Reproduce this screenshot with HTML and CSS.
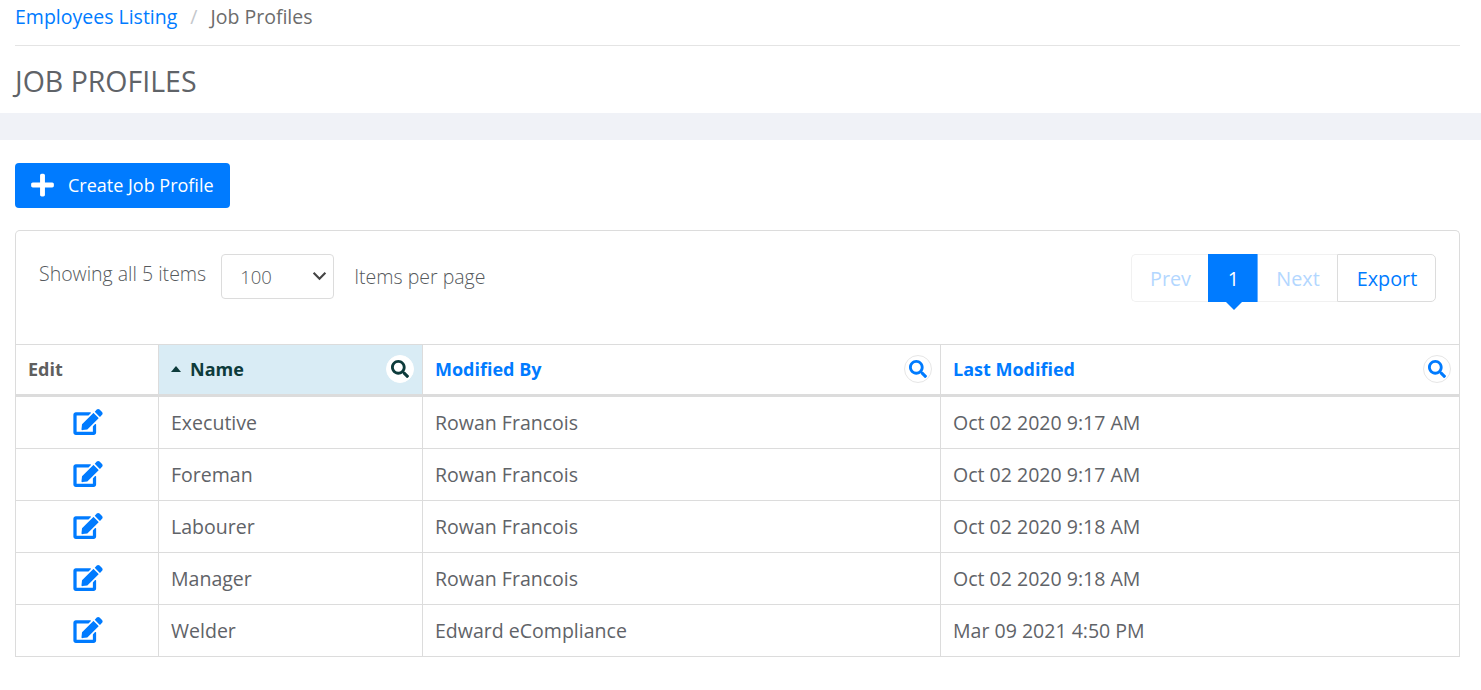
FILE: index.html
```html
<!DOCTYPE html>
<html lang="en">
<head>
<meta charset="utf-8">
<title>Job Profiles</title>
<link rel="stylesheet" href="styles.css">
</head>
<body>
<svg class="defs" aria-hidden="true">
  <symbol id="i-edit" viewBox="0 0 576 512"><path d="M402.6 83.2l90.2 90.2c3.8 3.8 3.8 10 0 13.8L274.4 405.6l-92.8 10.3c-12.4 1.4-22.9-9.1-21.5-21.5l10.3-92.8L388.8 83.2c3.8-3.8 10-3.8 13.8 0zm162-22.9l-48.8-48.8c-15.2-15.2-39.9-15.2-55.2 0l-35.4 35.4c-3.8 3.8-3.8 10 0 13.8l90.2 90.2c3.8 3.8 10 3.8 13.8 0l35.4-35.4c15.2-15.3 15.2-40 0-55.2zM384 346.2V448H64V128h229.8c3.2 0 6.2-1.3 8.5-3.5l40-40c7.6-7.6 2.2-20.5-8.5-20.5H48C21.5 64 0 85.5 0 112v352c0 26.5 21.5 48 48 48h352c26.5 0 48-21.5 48-48V306.2c0-10.7-12.9-16-20.5-8.5l-40 40c-2.2 2.3-3.5 5.3-3.5 8.5z"/></symbol>
  <symbol id="i-search" viewBox="0 0 512 512"><path d="M505 442.7L405.3 343c-4.5-4.5-10.6-7-17-7H372c27.6-35.3 44-79.7 44-128C416 93.1 322.9 0 208 0S0 93.1 0 208s93.1 208 208 208c48.3 0 92.7-16.4 128-44v16.3c0 6.4 2.5 12.5 7 17l99.7 99.7c9.4 9.4 24.6 9.4 33.9 0l28.3-28.3c9.4-9.4 9.4-24.6.1-34zM208 336c-70.7 0-128-57.2-128-128 0-70.7 57.2-128 128-128 70.7 0 128 57.2 128 128 0 70.7-57.2 128-128 128z"/></symbol>
  <symbol id="i-plus" viewBox="0 0 448 512"><path d="M416 208H272V64c0-17.67-14.33-32-32-32h-32c-17.67 0-32 14.33-32 32v144H32c-17.67 0-32 14.33-32 32v32c0 17.67 14.33 32 32 32h144v144c0 17.67 14.33 32 32 32h32c17.67 0 32-14.33 32-32V304h144c17.67 0 32-14.33 32-32v-32c0-17.67-14.33-32-32-32z"/></symbol>
</svg>

<header class="top">
  <nav class="crumbs">
    <a class="crumb-link" href="#">Employees Listing</a>
    <span class="crumb-sep">/</span>
    <span class="crumb-current">Job Profiles</span>
  </nav>
  <h1 class="title">JOB PROFILES</h1>
</header>
<div class="band"></div>

<main class="content">
  <a class="create-btn" href="#"><svg class="create-icon"><use href="#i-plus"/></svg><span>Create Job Profile</span></a>

  <section class="card">
    <div class="toolbar">
      <div class="toolbar-left">
        <span class="showing">Showing all 5 items</span>
        <div class="select"><span class="select-value">100</span><svg class="chev" viewBox="0 0 14 9"><path d="M1.5 1.5 7 7l5.5-5.5"/></svg></div>
        <span class="per-page">Items per page</span>
      </div>
      <div class="pager">
        <span class="pg pg-prev">Prev</span>
        <span class="pg pg-active">1</span>
        <span class="pg pg-next">Next</span>
        <a class="pg pg-export" href="#">Export</a>
      </div>
    </div>

    <table class="grid">
      <colgroup><col class="c1"><col class="c2"><col class="c3"><col class="c4"></colgroup>
      <thead>
        <tr>
          <th class="th-edit">Edit</th>
          <th class="th-sorted"><div class="th-in"><span class="sort-label"><i class="caret-up"></i>Name</span><span class="search-btn search-dark"><svg class="search-icon"><use href="#i-search"/></svg></span></div></th>
          <th><div class="th-in"><a class="th-link" href="#">Modified By</a><span class="search-btn"><svg class="search-icon"><use href="#i-search"/></svg></span></div></th>
          <th><div class="th-in"><a class="th-link" href="#">Last Modified</a><span class="search-btn"><svg class="search-icon"><use href="#i-search"/></svg></span></div></th>
        </tr>
      </thead>
      <tbody>
        <tr><td class="td-edit"><svg class="edit-icon"><use href="#i-edit"/></svg></td><td>Executive</td><td>Rowan Francois</td><td>Oct 02 2020 9:17 AM</td></tr>
        <tr><td class="td-edit"><svg class="edit-icon"><use href="#i-edit"/></svg></td><td>Foreman</td><td>Rowan Francois</td><td>Oct 02 2020 9:17 AM</td></tr>
        <tr><td class="td-edit"><svg class="edit-icon"><use href="#i-edit"/></svg></td><td>Labourer</td><td>Rowan Francois</td><td>Oct 02 2020 9:18 AM</td></tr>
        <tr><td class="td-edit"><svg class="edit-icon"><use href="#i-edit"/></svg></td><td>Manager</td><td>Rowan Francois</td><td>Oct 02 2020 9:18 AM</td></tr>
        <tr><td class="td-edit"><svg class="edit-icon"><use href="#i-edit"/></svg></td><td>Welder</td><td>Edward eCompliance</td><td>Mar 09 2021 4:50 PM</td></tr>
      </tbody>
    </table>
  </section>
</main>
</body>
</html>
```
FILE: styles.css
```css
* { box-sizing: border-box; }
html, body { margin: 0; padding: 0; }
body {
  font-family: "Open Sans", "Liberation Sans", sans-serif;
  color: #5f5f5f;
  background: #fff;
  overflow: hidden;
  height: 690px;
}
a { text-decoration: none; color: #007bff; }
.defs { display: none; }

.top { padding: 0 21px 0 15px; height: 113px; }
.crumbs {
  height: 46px;
  border-bottom: 1px solid #e4e4e4;
  font-size: 19.5px;
  line-height: 34px;
  display: flex;
}
.crumb-sep { color: #c4c7cc; margin: 0 13px; }
.crumb-current { color: #6c6c6c; }
.title {
  margin: 0;
  font-size: 28.5px;
  font-weight: 400;
  line-height: 36px;
  padding-top: 17px;
  color: #5f6368;
}
.band { height: 27px; background: #f0f2f7; }

.content { padding: 23px 21px 0 15px; }
.create-btn {
  display: inline-flex;
  align-items: center;
  height: 45px;
  width: 215px;
  padding: 0 0 2px 16px;
  background: #007bff;
  border-radius: 4px;
  color: #fff;
  font-size: 18px;
}
.create-icon { width: 23px; height: 26px; fill: #fff; margin-right: 14px; }

.card {
  margin-top: 22px;
  border: 1px solid #dcdcdc;
  border-bottom: 0;
  border-radius: 5px 5px 0 0;
}
.toolbar {
  height: 113px;
  padding: 23px 23px 0 23px;
  display: flex;
  justify-content: space-between;
  align-items: flex-start;
}
.toolbar-left { display: flex; align-items: flex-start; font-weight: 300; font-size: 19.5px; color: #55595c; }
.showing { line-height: 40px; margin-right: 15px; }
.select {
  width: 113px;
  height: 45px;
  border: 1px solid #dcdcdc;
  border-radius: 4px;
  display: flex;
  align-items: center;
  justify-content: space-between;
  padding: 0 6px 0 18px;
  margin-right: 20px;
}
.select-value { font-size: 18.5px; }
.chev { width: 15px; height: 10px; fill: none; stroke: #444; stroke-width: 2; margin-top: -2px; }
.per-page { line-height: 46px; }

.pager { display: flex; height: 48px; font-size: 19.8px; }
.pg { display: flex; align-items: center; justify-content: center; height: 48px; }
.pg-prev {
  width: 77px;
  color: #b3d7ff;
  border: 1px solid #f1f1f1;
  border-right: 0;
  border-radius: 5px 0 0 5px;
  padding-left: 1px;
}
.pg-active {
  width: 50px;
  background: #007bff;
  color: #fff;
  border-right: 1px solid #66b0ff;
  position: relative;
  padding-left: 2px;
}
.pg-active::after {
  content: "";
  position: absolute;
  left: 18px;
  top: 48px;
  border: 8px solid transparent;
  border-top-color: #007bff;
  border-bottom: 0;
}
.pg-next {
  width: 79px;
  color: #b3d7ff;
  border-top: 1px solid #f1f1f1;
  border-bottom: 1px solid #f1f1f1;
  padding-left: 1px;
}
.pg-export {
  width: 99px;
  border: 1px solid #dcdcdc;
  border-radius: 0 5px 5px 0;
  padding-left: 1px;
}

.grid {
  width: 100%;
  table-layout: fixed;
  border-collapse: separate;
  border-spacing: 0;
  font-size: 19.55px;
}
.c1 { width: 142px; }
.c2 { width: 264px; }
.c3 { width: 518px; }
.grid th, .grid td {
  padding: 0 12px;
  text-align: left;
  border-top: 1px solid #dcdcdc;
  border-left: 1px solid #dcdcdc;
}
.grid tr > :first-child { border-left: 0; }
.grid th {
  height: 53px;
  font-size: 18px;
  font-weight: 700;
  border-bottom: 3px solid #dcdcdc;
  padding: 0 9px 2px 12px;
}
.grid tbody tr:first-child td { border-top: 0; height: 51px; }
.grid td { height: 52px; color: #5f6368; }
.grid tbody tr:last-child td { border-bottom: 1px solid #dcdcdc; height: 53px; }
.th-sorted { background: #d9ecf5; color: #0d3b3b; }
.th-in { display: flex; align-items: center; justify-content: space-between; }
.sort-label { display: flex; align-items: center; }
.caret-up {
  width: 0; height: 0;
  border: 5.5px solid transparent;
  border-bottom: 6px solid #0d3b3b;
  border-top: 0;
  margin-right: 9px;
  display: block;
}
.search-btn {
  width: 28px; height: 28px;
  border-radius: 50%;
  background: #fff;
  border: 1px solid #e6e6e6;
  display: flex; align-items: center; justify-content: center;
  fill: #007bff;
  margin-right: -1px;
}
.search-dark { border-color: #fff; fill: #0d3b3b; }
.search-icon { width: 18px; height: 18px; }
.td-edit { text-align: center !important; }
.edit-icon { width: 30px; height: 26px; fill: #007bff; display: block; margin: -1px 0 0 44.5px; }
```
